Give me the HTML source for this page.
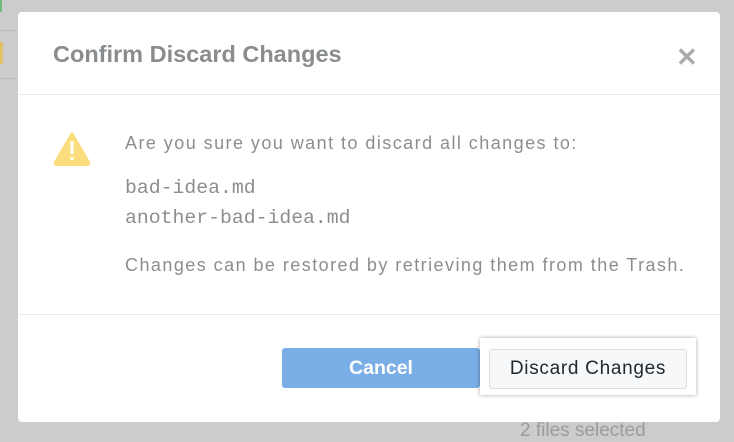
<!DOCTYPE html>
<html><head><style>
body{margin:0;width:734px;height:436px;background:#cbcccc;position:relative;overflow:hidden;font-family:"Liberation Sans",sans-serif}
.dlg{position:absolute;left:18px;top:12px;width:702px;height:410px;background:#fff;border-radius:4px}
.h{position:absolute;left:35px;top:29px;font-size:23.5px;font-weight:bold;color:#8a8d90}
.x{position:absolute;left:658px;top:30px;font-size:26px;color:#a9acaf;font-weight:bold}
.l1{position:absolute;left:0;top:82px;width:702px;height:1px;background:#e8eaec}
.l2{position:absolute;left:0;top:302px;width:702px;height:1px;background:#e8eaec}
.t{position:absolute;left:107px;font-size:18px;letter-spacing:1.45px;color:#8b8e91;white-space:nowrap}
.m{position:absolute;left:107px;font-family:"Liberation Mono",monospace;font-size:19.8px;color:#8b8e91}
.cancel{position:absolute;left:264px;top:336px;width:198px;height:40px;background:#7aaee6;border-radius:3px;color:#fff;font-weight:bold;font-size:19.5px;text-align:center;line-height:40px}
.hl{position:absolute;left:480px;top:338px;width:216px;height:57px;background:#fff;box-shadow:0 0 4px rgba(0,0,0,.35)}
.dc{position:absolute;left:489px;top:349px;width:196px;height:38px;background:#f7f8f9;border:1px solid #dcdfe2;border-radius:3px;font-size:19px;letter-spacing:.7px;color:#24292e;text-align:center;line-height:38px;white-space:nowrap}
.foot{position:absolute;left:520px;top:420px;font-size:19px;color:#9a9c9e}
</style></head><body>
<div style="position:absolute;left:0;top:0;width:2px;height:12px;background:#6cbb7a"></div>
<div style="position:absolute;left:0;top:30px;width:18px;height:1px;background:#bbb"></div>
<div style="position:absolute;left:0;top:42px;width:3px;height:22px;background:#e2c067"></div>
<div style="position:absolute;left:0;top:78px;width:18px;height:1px;background:#bbb"></div>
<div class="foot">2 files selected</div>
<div class="dlg">
<div class="h">Confirm Discard Changes</div>
<div class="x">✕</div>
<div class="l1"></div>
<svg style="position:absolute;left:34px;top:118px" width="40" height="36" viewBox="0 0 40 36"><path d="M20 3 L37 32 Q38 35 35 35 L5 35 Q2 35 3 32 Z" fill="#fbdd7e" stroke="#fbdd7e" stroke-linejoin="round" stroke-width="2"/><rect x="18.5" y="11" width="3" height="13" fill="#fff"/><rect x="18.5" y="27" width="3" height="3" fill="#fff"/></svg>
<div class="t" style="top:121px">Are you sure you want to discard all changes to:</div>
<div class="m" style="top:165px">bad-idea.md</div>
<div class="m" style="top:195px">another-bad-idea.md</div>
<div class="t" style="top:243px">Changes can be restored by retrieving them from the Trash.</div>
<div class="l2"></div>
<div class="cancel">Cancel</div>
</div>
<div class="hl"></div>
<div class="dc">Discard Changes</div>
</body></html>
